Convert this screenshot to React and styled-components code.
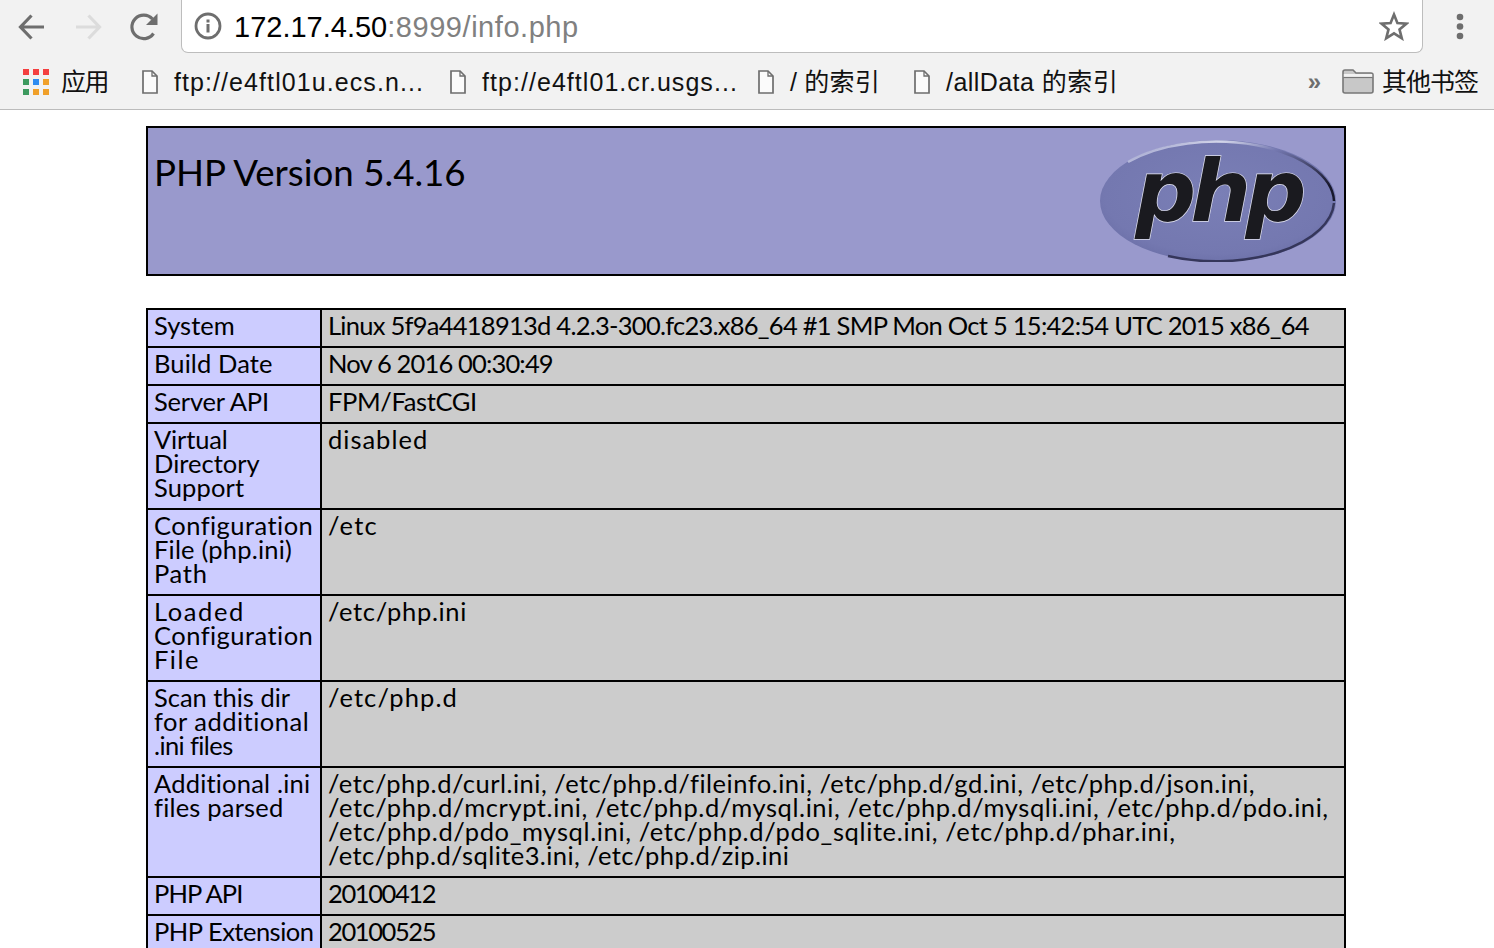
import styled, { createGlobalStyle } from 'styled-components';

const GlobalStyle = createGlobalStyle`
  html, body {
    margin: 0;
    padding: 0;
    background: white;
  }
`

const Page = styled.div`
  height: 100vh;
  overflow: hidden;
  display: flex;
  flex-direction: column;
`

const Chrome = styled.div`
  background: #f2f2f2;
  border-bottom: 1px solid #bcbcbc;
  height: 109px;
  font-family: "Liberation Sans", "Noto Sans CJK SC", sans-serif;
  flex: none;
`

const Toolbar = styled.div`
  display: flex;
  align-items: flex-start;
  height: 54px;
  padding-left: 4px;
`

const NavButton = styled.div`
  width: 56px;
  height: 54px;
  display: flex;
  align-items: center;
  justify-content: center;
`

const AddressBar = styled.div`
  margin-left: 9px;
  width: 1242px;
  flex: none;
  height: 53px;
  box-sizing: border-box;
  background: white;
  border: 1px solid #bdbdbd;
  border-top: none;
  border-radius: 0 0 7px 7px;
  display: flex;
  align-items: center;
  padding: 0 13px 0 12px;
  gap: 12px;
`

const Url = styled.div`
  flex: 1;
  font-size: 29px;
  padding-top: 2px;
  color: #808080;
  letter-spacing: 0.55px;
  white-space: nowrap;
`

const Host = styled.span`
  color: black;
  letter-spacing: 0;
`

const MenuButton = styled.div`
  width: 71px;
  height: 54px;
  box-sizing: border-box;
  padding-left: 33px;
  display: flex;
  align-items: center;
`

const BookmarkBar = styled.div`
  display: flex;
  align-items: center;
  height: 55px;
  padding: 0 16px 0 23px;
`

const Bookmark = styled.div`
  display: flex;
  align-items: center;
  gap: ${props => props.$gap || 16}px;
  width: ${props => props.$width}px;
  flex: none;
  height: 30px;
  line-height: 30px;
  color: #111;
  font-size: 25px;
  letter-spacing: ${props => props.$track || 0}px;
  white-space: nowrap;
`

const OtherBookmarks = styled(Bookmark)`
  margin-left: auto;
  gap: 8px;
  width: auto;
`

const Chevron = styled.div`
  margin-right: 14px;
  color: #6e6e6e;
  font-size: 24px;
  line-height: 1;
  font-weight: bold;
`

const Content = styled.div`
  padding: 16px 148px 0 146px;
  font-family: Lato, sans-serif;
  font-size: 25.5px;
  line-height: 24px;
  color: black;
`

const Banner = styled.div`
  height: 150px;
  box-sizing: border-box;
  background: #9999cc;
  border: 2px solid black;
  display: flex;
  justify-content: space-between;
  padding: 6px 6px 0 6px;
  margin-bottom: 32px;
`

const Heading = styled.h1`
  margin: 16px 0 0 0;
  font-size: 36.7px;
  font-weight: 400;
  line-height: 44px;
`

const InfoTable = styled.table`
  width: 1200px;
  table-layout: fixed;
  border-collapse: separate;
  border-spacing: 0;
  border-top: 2px solid black;
  border-left: 2px solid black;
  border-right: 2px solid black;
`

const KeyCell = styled.td`
  width: 166px;
  padding: 3px 0 9px 6px;
  background: #ccccff;
  border-right: 2px solid black;
  border-bottom: 2px solid black;
  vertical-align: top;
  white-space: nowrap;
`

const ValueCell = styled.td`
  padding: 3px 6px 9px 6px;
  background: #cccccc;
  border-bottom: 2px solid black;
  vertical-align: top;
  white-space: nowrap;
`

const Line = styled.div`
  letter-spacing: ${props => props.$track || 0}px;
`

const ArrowIcon = ({ color, flip }) => (
  <svg width="30" height="30" viewBox="0 0 30 30" fill="none" style={flip ? { transform: 'scaleX(-1)' } : undefined}>
    <path d="M27 15H4M14.5 3.5 3.5 15l11 11.5" stroke={color} strokeWidth="3.2" />
  </svg>
)

const ReloadIcon = () => (
  <svg width="30" height="30" viewBox="0 0 30 30" fill="none">
    <path d="M24.5 21.5A11.8 11.8 0 1 1 23.5 7" stroke="#6e6e6e" strokeWidth="3.2" />
    <path d="M28.5 1.5V13H17z" fill="#6e6e6e" />
  </svg>
)

const InfoIcon = () => (
  <svg width="28" height="28" viewBox="0 0 28 28" fill="none">
    <circle cx="14" cy="14" r="12" stroke="#6e6e6e" strokeWidth="2.8" />
    <rect x="12.5" y="7.5" width="3" height="3" fill="#6e6e6e" />
    <rect x="12.5" y="12" width="3" height="8.5" fill="#6e6e6e" />
  </svg>
)

const StarIcon = () => (
  <svg width="30" height="30" viewBox="0 0 30 30" fill="none">
    <path d="M15 3.5 18.4 12l9.1.6-7 5.8 2.3 8.9L15 22.4l-7.8 4.9 2.3-8.9-7-5.8 9.1-.6z" stroke="#6e6e6e" strokeWidth="2.6" />
  </svg>
)

const DotsIcon = () => (
  <svg width="8" height="30" viewBox="0 0 8 30">
    <circle cx="4" cy="5" r="3.3" fill="#6e6e6e" />
    <circle cx="4" cy="14.5" r="3.3" fill="#6e6e6e" />
    <circle cx="4" cy="24" r="3.3" fill="#6e6e6e" />
  </svg>
)

const AppsIcon = () => {
  const colors = ['#f44040', '#f44040', '#f44040', '#3d9a5f', '#2f8cf0', '#f0a02a', '#3d9a5f', '#f0a02a', '#f0a02a']
  return (
    <svg width="26" height="26" viewBox="0 0 26 26">
      {colors.map((color, index) => (
        <rect key={index} x={(index % 3) * 10} y={Math.floor(index / 3) * 10} width="6" height="6" fill={color} />
      ))}
    </svg>
  )
}

const FileIcon = () => (
  <svg width="16" height="24" viewBox="0 0 16 24" fill="none">
    <path d="M1 1h9l5 5v17H1z" stroke="#6e6e6e" strokeWidth="1.7" fill="#fbfbfb" />
    <path d="M10 1v5h5" stroke="#6e6e6e" strokeWidth="1.3" />
  </svg>
)

const FolderIcon = () => (
  <svg width="32" height="25" viewBox="0 0 32 25">
    <path d="M1 3q0-2 2-2h8l3 3h15q2 0 2 2v16q0 2-2 2H3q-2 0-2-2z" fill="#c8c8c8" stroke="#777" strokeWidth="1.6" />
    <path d="M1.8 5h28.4v3H1.8z" fill="#f2f2f2" />
    <path d="M1.5 8.5h29" stroke="#777" strokeWidth="1.2" />
  </svg>
)

const PhpLogo = () => (
  <svg width="240" height="128" viewBox="0 0 240 128">
    <defs>
      <radialGradient id="oval" cx="0.5" cy="0.45" r="0.6">
        <stop offset="0" stopColor="#7a7fb6" />
        <stop offset="0.8" stopColor="#7478b0" />
        <stop offset="1" stopColor="#6a6ea6" />
      </radialGradient>
      <linearGradient id="rim" x1="0" y1="0" x2="1" y2="0.7">
        <stop offset="0" stopColor="#8f93c4" />
        <stop offset="0.3" stopColor="#d4d6ea" />
        <stop offset="0.55" stopColor="#7478b0" />
        <stop offset="1" stopColor="#18182c" />
      </linearGradient>
    </defs>
    <ellipse cx="120" cy="67" rx="118" ry="61" fill="url(#oval)" />
    <path d="M30 28A118 61 0 0 1 236 67" fill="none" stroke="url(#rim)" strokeWidth="2.5" />
    <path d="M70 122A118 61 0 0 0 236 69" fill="none" stroke="#35365a" strokeWidth="2.5" />
    <text x="120" y="87" textAnchor="middle" fontFamily="DejaVu Sans" fontWeight="700" fontStyle="italic" fontSize="85" letterSpacing="-5.5" fill="#1a1a1f" stroke="#dfe0ee" strokeWidth="1.4" paintOrder="stroke">php</text>
  </svg>
)

// each line is [text, letter-spacing] so the lines keep the reference's widths
const rows = [
  { key: [['System', 0]], value: [['Linux 5f9a4418913d 4.2.3-300.fc23.x86_64 #1 SMP Mon Oct 5 15:42:54 UTC 2015 x86_64', -0.74]] },
  { key: [['Build Date', 0.1]], value: [['Nov 6 2016 00:30:49', -0.84]] },
  { key: [['Server API', -0.2]], value: [['FPM/FastCGI', -0.36]] },
  { key: [['Virtual', -0.15], ['Directory', 0], ['Support', 0.15]], value: [['disabled', 1]] },
  { key: [['Configuration', 0.46], ['File (php.ini)', 0.2], ['Path', 0.7]], value: [['/etc', 1.2]] },
  { key: [['Loaded', 1.6], ['Configuration', 0.46], ['File', 1.5]], value: [['/etc/php.ini', 0.66]] },
  { key: [['Scan this dir', 0], ['for additional', 0.5], ['.ini files', -0.6]], value: [['/etc/php.d', 1.1]] },
  {
    key: [['Additional .ini', 0.2], ['files parsed', 0.2]],
    value: [
      ['/etc/php.d/curl.ini, /etc/php.d/fileinfo.ini, /etc/php.d/gd.ini, /etc/php.d/json.ini,', 0.5],
      ['/etc/php.d/mcrypt.ini, /etc/php.d/mysql.ini, /etc/php.d/mysqli.ini, /etc/php.d/pdo.ini,', 0.59],
      ['/etc/php.d/pdo_mysql.ini, /etc/php.d/pdo_sqlite.ini, /etc/php.d/phar.ini,', 0.64],
      ['/etc/php.d/sqlite3.ini, /etc/php.d/zip.ini', 0.42],
    ],
  },
  { key: [['PHP API', -0.9]], value: [['20100412', -1.4]] },
  { key: [['PHP Extension', -0.5]], value: [['20100525', -1.4]] },
]

const Lines = ({ lines }) => lines.map(([text, track]) => (
  <Line key={text} $track={track}>{text}</Line>
))

const App = () => {
  return (
    <Page>
      <GlobalStyle />
      <Chrome>
        <Toolbar>
          <NavButton><ArrowIcon color="#6e6e6e" /></NavButton>
          <NavButton><ArrowIcon color="#dcdcdc" flip /></NavButton>
          <NavButton><ReloadIcon /></NavButton>
          <AddressBar>
            <InfoIcon />
            <Url><Host>172.17.4.50</Host>:8999/info.php</Url>
            <StarIcon />
          </AddressBar>
          <MenuButton><DotsIcon /></MenuButton>
        </Toolbar>
        <BookmarkBar>
          <Bookmark $width={119} $gap={12} $track={-1.5}><AppsIcon />应用</Bookmark>
          <Bookmark $width={308} $track={1.08}><FileIcon />ftp://e4ftl01u.ecs.n...</Bookmark>
          <Bookmark $width={308} $track={1.05}><FileIcon />ftp://e4ftl01.cr.usgs...</Bookmark>
          <Bookmark $width={156} $track={0.2}><FileIcon />/ 的索引</Bookmark>
          <Bookmark $width={220} $track={0.45}><FileIcon />/allData 的索引</Bookmark>
          <OtherBookmarks $track={-1}>
            <Chevron>»</Chevron>
            <FolderIcon />其他书签
          </OtherBookmarks>
        </BookmarkBar>
      </Chrome>
      <Content>
        <Banner>
          <Heading>PHP Version 5.4.16</Heading>
          <PhpLogo />
        </Banner>
        <InfoTable>
          <tbody>
            {rows.map(row => (
              <tr key={row.key[0][0]}>
                <KeyCell><Lines lines={row.key} /></KeyCell>
                <ValueCell><Lines lines={row.value} /></ValueCell>
              </tr>
            ))}
          </tbody>
        </InfoTable>
      </Content>
    </Page>
  )
}

export default App
